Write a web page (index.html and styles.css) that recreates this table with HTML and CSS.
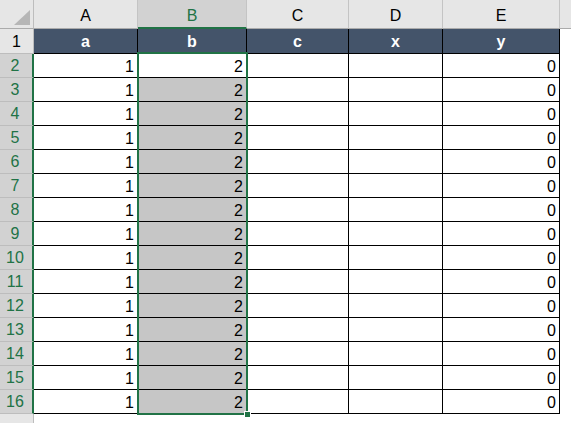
FILE: index.html
```html
<!DOCTYPE html>
<html>
<head>
<meta charset="utf-8">
<link rel="stylesheet" href="styles.css">
</head>
<body>
<div class="sheet">
  <div class="corner"><span class="tri"></span></div>
  <div class="ch">A</div>
  <div class="ch sel">B</div>
  <div class="ch">C</div>
  <div class="ch">D</div>
  <div class="ch">E</div>
  <div class="ch end"></div>

  <div class="rh first">1</div>
  <div class="c th">a</div>
  <div class="c th">b</div>
  <div class="c th">c</div>
  <div class="c th">x</div>
  <div class="c th">y</div>
  <div class="c blank"></div>

  <div class="rh">2</div><div class="c">1</div><div class="c b act">2</div><div class="c"></div><div class="c"></div><div class="c">0</div><div class="c blank"></div>
  <div class="rh">3</div><div class="c">1</div><div class="c b">2</div><div class="c"></div><div class="c"></div><div class="c">0</div><div class="c blank"></div>
  <div class="rh">4</div><div class="c">1</div><div class="c b">2</div><div class="c"></div><div class="c"></div><div class="c">0</div><div class="c blank"></div>
  <div class="rh">5</div><div class="c">1</div><div class="c b">2</div><div class="c"></div><div class="c"></div><div class="c">0</div><div class="c blank"></div>
  <div class="rh">6</div><div class="c">1</div><div class="c b">2</div><div class="c"></div><div class="c"></div><div class="c">0</div><div class="c blank"></div>
  <div class="rh">7</div><div class="c">1</div><div class="c b">2</div><div class="c"></div><div class="c"></div><div class="c">0</div><div class="c blank"></div>
  <div class="rh">8</div><div class="c">1</div><div class="c b">2</div><div class="c"></div><div class="c"></div><div class="c">0</div><div class="c blank"></div>
  <div class="rh">9</div><div class="c">1</div><div class="c b">2</div><div class="c"></div><div class="c"></div><div class="c">0</div><div class="c blank"></div>
  <div class="rh">10</div><div class="c">1</div><div class="c b">2</div><div class="c"></div><div class="c"></div><div class="c">0</div><div class="c blank"></div>
  <div class="rh">11</div><div class="c">1</div><div class="c b">2</div><div class="c"></div><div class="c"></div><div class="c">0</div><div class="c blank"></div>
  <div class="rh">12</div><div class="c">1</div><div class="c b">2</div><div class="c"></div><div class="c"></div><div class="c">0</div><div class="c blank"></div>
  <div class="rh">13</div><div class="c">1</div><div class="c b">2</div><div class="c"></div><div class="c"></div><div class="c">0</div><div class="c blank"></div>
  <div class="rh">14</div><div class="c">1</div><div class="c b">2</div><div class="c"></div><div class="c"></div><div class="c">0</div><div class="c blank"></div>
  <div class="rh">15</div><div class="c">1</div><div class="c b">2</div><div class="c"></div><div class="c"></div><div class="c">0</div><div class="c blank"></div>
  <div class="rh">16</div><div class="c">1</div><div class="c b">2</div><div class="c"></div><div class="c"></div><div class="c">0</div><div class="c blank"></div>

  <div class="rh tail"></div>

  <div class="selection"><span class="handle"></span></div>
</div>
</body>
</html>
```

FILE: styles.css
```css
* { box-sizing: border-box; }
html, body { margin: 0; padding: 0; background: #ffffff; }
body { width: 571px; height: 423px; overflow: hidden; }

.sheet {
  position: relative;
  display: grid;
  grid-template-columns: 34px 104px 109px 102px 94px 117px 11px;
  grid-template-rows: 29px 25px repeat(15, 24px) 10px;
  font-family: "Liberation Sans", Arial, sans-serif;
  font-size: 16px;
  color: #000;
}

.corner {
  position: relative;
  background: #e6e6e6;
  border-right: 1px solid #bdbdbd;
  border-bottom: 1px solid #ababab;
}
.tri {
  position: absolute;
  left: 14px;
  top: 10px;
  width: 0;
  height: 0;
  border-left: 16px solid transparent;
  border-bottom: 15px solid #b6b6b6;
}

.ch {
  background: #e6e6e6;
  border-right: 1px solid #c4c4c4;
  border-bottom: 1px solid #ababab;
  display: flex;
  align-items: center;
  justify-content: center;
  padding-top: 3px;
  color: #000;
}
.ch.sel {
  background: #d2d2d2;
  color: #217346;
  border-bottom: 2px solid #217346;
  padding-top: 4px;
}
.ch.end { border-right: none; }

.rh {
  background: #d2d2d2;
  color: #217346;
  border-right: 2px solid #217346;
  border-bottom: 1px solid #bdbdbd;
  display: flex;
  align-items: center;
  justify-content: center;
  padding-right: 2px;
  padding-top: 1px;
}
.rh.first {
  background: #e6e6e6;
  color: #000;
  border-right: 1px solid #bdbdbd;
  padding-right: 0;
}
.rh.tail {
  background: #e6e6e6;
  border-right: 1px solid #bdbdbd;
  border-bottom: none;
}

.c {
  border-right: 1px solid #000;
  border-bottom: 1px solid #000;
  display: flex;
  align-items: center;
  justify-content: flex-end;
  padding-right: 3px;
  padding-top: 2px;
  background: #fff;
}
.c.th {
  background: #44546a;
  color: #fff;
  font-weight: bold;
  justify-content: center;
  padding-right: 0;
}
.c.b { background: #c6c6c6; }
.c.b.act { background: #fff; }
.c.blank {
  border: none;
  background: #fff;
}

.selection {
  position: absolute;
  left: 137px;
  top: 52px;
  width: 111px;
  height: 363px;
  border: 2px solid #217346;
  pointer-events: none;
}
.handle {
  position: absolute;
  right: -5px;
  bottom: -5px;
  width: 7px;
  height: 7px;
  background: #217346;
  border: 1px solid #fff;
}
```
